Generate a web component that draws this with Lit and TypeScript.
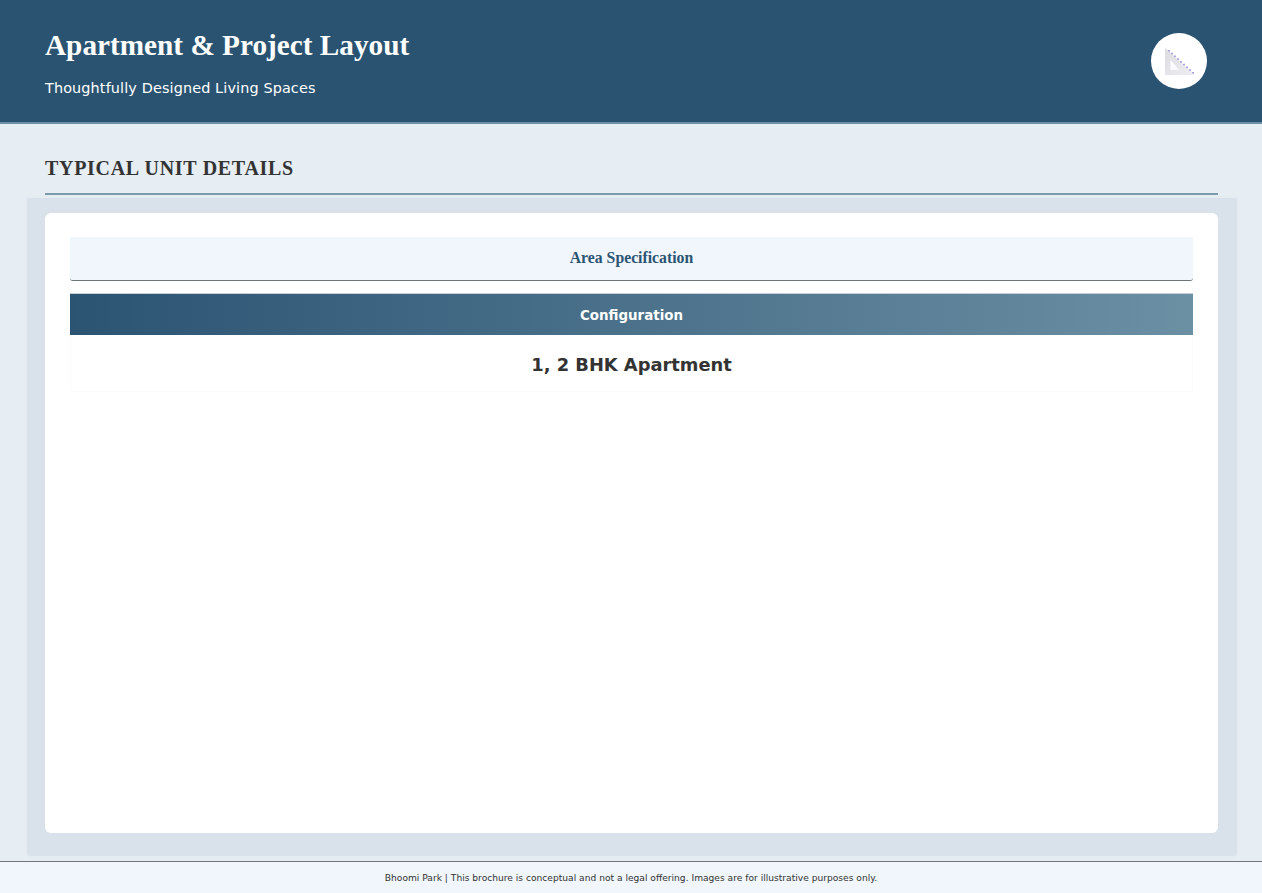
import { LitElement, html, css, svg } from "lit";
import { customElement } from "lit/decorators.js";

@customElement("app-root")
export class AppRoot extends LitElement {
  static styles = css`
    :host {
      display: flex;
      flex-direction: column;
      height: 893px;
      background: #e6edf3;
      font-family: "DejaVu Sans", sans-serif;
      color: #333;
      overflow: hidden;
    }
    .head {
      box-sizing: border-box;
      height: 124px;
      flex: none;
      background: #2a5372;
      border-bottom: 2px solid #6b8fa3;
      padding: 2px 55px 0 45px;
      display: flex;
      align-items: center;
      justify-content: space-between;
      color: #fff;
    }
    h1 {
      margin: 0 0 16px;
      font: bold 29.25px/36px "Liberation Serif", serif;
    }
    .sub {
      font-size: 14.4px;
      line-height: 18px;
      letter-spacing: 0.13px;
    }
    .logo {
      width: 56px;
      height: 56px;
      margin-top: -2px;
      border-radius: 50%;
      background: #fff;
      display: flex;
      align-items: center;
      justify-content: center;
    }
    .logo svg { display: block; }
    .main {
      flex: 1;
      min-height: 0;
      display: flex;
      flex-direction: column;
      padding: 31px 25px 5px 27px;
    }
    h2 {
      margin: 0 19px 0 18px;
      font: bold 20px/26px "Liberation Serif", serif;
      letter-spacing: 0.7px;
      color: #333;
      padding-bottom: 12px;
      border-bottom: 2px solid #7b9aab;
    }
    .panel {
      flex: 1;
      min-height: 0;
      display: flex;
      margin-top: 3px;
      padding: 15px 19px 23px 18px;
      background: #d9e2ea;
      border-radius: 3px;
      box-shadow: 0 0 3px #e0e8ee;
    }
    .card {
      flex: 1;
      background: #fff;
      border-radius: 6px;
      padding: 24px 25px;
    }
    .spec {
      height: 41px;
      padding-bottom: 2px;
      display: flex;
      align-items: center;
      justify-content: center;
      background: #f0f6fc;
      border-bottom: 1px solid #6f7478;
      border-radius: 0 0 3px 3px;
      font: bold 15.75px "Liberation Serif", serif;
      color: #2b5473;
    }
    .table { margin-top: 13px; }
    .th {
      height: 41px;
      display: flex;
      align-items: center;
      justify-content: center;
      padding-top: 1px;
      box-sizing: border-box;
      background: linear-gradient(90deg, #2b5473, #6b8fa3);
      box-shadow: 0 -1px 0 #c8cfdc;
      color: #fff;
      font-size: 13.4px;
      font-weight: bold;
    }
    .td {
      height: 54px;
      display: flex;
      align-items: center;
      justify-content: center;
      padding-top: 2px;
      font-size: 17.85px;
      font-weight: bold;
      color: #333;
      border: 1px solid #fbfcfd;
      border-top: 0;
    }
    .foot {
      flex: none;
      height: 31px;
      display: flex;
      align-items: center;
      justify-content: center;
      background: #f0f6fc;
      border-top: 1px solid #6f7478;
      font-size: 9.12px;
      color: #333;
    }
  `;

  render() {
    const ticks = [0, 1, 2, 3, 4, 5, 6, 7, 8];
    return html`
      <header class="head">
        <div>
          <h1>Apartment &amp; Project Layout</h1>
          <div class="sub">Thoughtfully Designed Living Spaces</div>
        </div>
        <div class="logo">
          <svg width="30" height="30" viewBox="0 0 30 30" aria-hidden="true">
            <defs>
              <linearGradient id="sq" x1="0" y1="0" x2="1" y2="1">
                <stop offset="0" stop-color="#dcdce0" />
                <stop offset="1" stop-color="#eeeef2" />
              </linearGradient>
            </defs>
            <path fill-rule="evenodd" fill="url(#sq)" d="M1 2 L28.5 26.5 L28.5 29 L1 29 Z M6.7 14 L6.7 24 L14.5 24 Z" />
            <path fill="#fbfbfd" d="M6.7 14 L6.7 24 L14.5 24 Z" />
            ${ticks.map(
              (i) => svg`<rect x=${4 + i * 3} y=${4 + i * 2.75} width="2" height="1.6" fill="#aaa5e0" />`
            )}
          </svg>
        </div>
      </header>
      <main class="main">
        <h2>TYPICAL UNIT DETAILS</h2>
        <div class="panel">
          <section class="card">
            <div class="spec">Area Specification</div>
            <div class="table">
              <div class="th">Configuration</div>
              <div class="td">1, 2 BHK Apartment</div>
            </div>
          </section>
        </div>
      </main>
      <footer class="foot">Bhoomi Park | This brochure is conceptual and not a legal offering. Images are for illustrative purposes only.</footer>
    `;
  }
}
